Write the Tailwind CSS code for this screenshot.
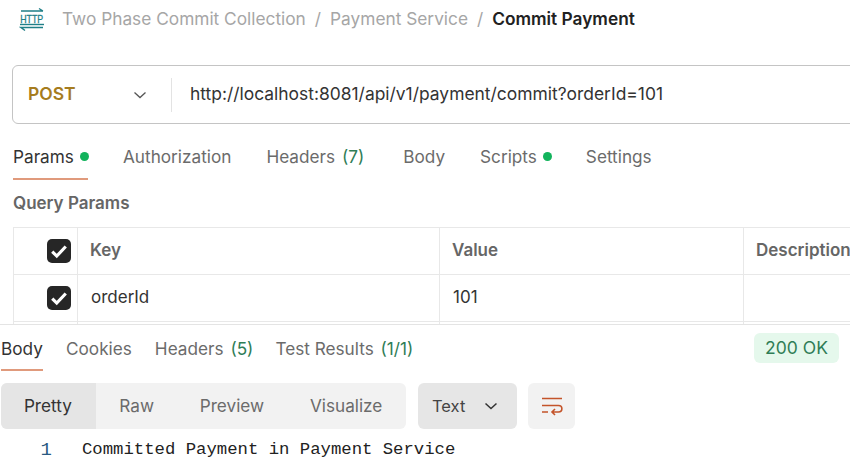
<!DOCTYPE html>
<html><head><meta charset="utf-8"><script src="https://cdn.jsdelivr.net/npm/@tailwindcss/browser@4"></script></head>
<body class="bg-white">
<div class="w-[850px] h-[465px] overflow-hidden flex flex-col font-['Inter',sans-serif] text-[#6b6b6b] text-[17.2px]">
  <div class="h-[65px] shrink-0 flex items-start pl-[19px] pt-[7px]">
    <svg width="26" height="26" viewBox="0 0 26 26" class="shrink-0" fill="none" stroke="#1f7f87" stroke-width="1.4">
      <path d="M2 4H24M20 1.5L24 4"/>
      <path d="M1 17.5H25"/><path d="M6 23.5L2 20.5H24"/>
      <text transform="scale(.8 1)" x="1.5" y="16" font-family="Liberation Sans" font-size="11" stroke="#1f7f87" stroke-width=".3" fill="#1f7f87">HTTP</text>
    </svg>
    <div class="ml-[17px] mt-[2px] flex items-center whitespace-nowrap leading-[20px] text-[#a6a6a6] text-[17.3px]">
      <span>Two Phase Commit Collection</span><span class="mx-[9px]">/</span><span>Payment Service</span><span class="mx-[9px]">/</span><span class="font-semibold text-[#212121] text-[17.3px]">Commit Payment</span>
    </div>
  </div>
  <div class="h-[59px] shrink-0 ml-[12px] w-[860px] border border-[#c4c4c4] rounded-[6px] flex items-center">
    <div class="w-[158px] shrink-0 flex items-center justify-between pl-[15px] pr-[24px] text-[17.5px]">
      <span class="font-semibold text-[#a67c1e]">POST</span>
      <svg width="14" height="14" viewBox="0 0 14 14" fill="none" stroke="#555" stroke-width="1.3"><path d="M1.5 4.5L7 9.5L12.5 4.5"/></svg>
    </div>
    <div class="w-px h-[34px] bg-[#e3e3e3]"></div>
    <div class="pl-[18px] text-[#333] whitespace-nowrap text-[17.43px]">http://localhost:8081/api/v1/payment/commit?orderId=101</div>
  </div>
  <div class="h-[57px] shrink-0 flex items-start pl-[13px] pt-[23px] leading-[20px] whitespace-nowrap">
    <div class="w-[75px] h-[33px] shrink-0 border-b-2 border-[#e09a7c] flex items-start text-[#333]"><span>Params</span><span class="w-[9px] h-[9px] shrink-0 rounded-full bg-[#12b35c] ml-[6px] mt-[5px]"></span></div>
    <span class="ml-[35px]">Authorization</span>
    <span class="ml-[35px]">Headers <span class="text-[#2f7d56] ml-[2px]">(7)</span></span>
    <span class="ml-[39px]">Body</span>
    <span class="ml-[35px] flex items-start">Scripts<span class="w-[9px] h-[9px] shrink-0 rounded-full bg-[#12b35c] ml-[6px] mt-[5px]"></span></span>
    <span class="ml-[34px]">Settings</span>
  </div>
  <div class="h-[46px] shrink-0 pl-[13px] pt-[12px] font-semibold text-[#666] text-[17px] leading-[20px]">Query Params</div>
  <div class="ml-[13px] h-[98px] shrink-0 w-[900px] overflow-hidden border-t border-l border-[#e8e8e8] grid grid-cols-[64px_362px_304px_1fr] grid-rows-[47px_47px_10px]">
    <div class="border-r border-b border-[#e8e8e8] flex items-center pl-[33px]">
      <span class="w-[24px] h-[24px] rounded-[5px] bg-[#262626] flex items-center justify-center"><svg width="18" height="18" viewBox="0 0 16 16" fill="none" stroke="#fff" stroke-width="2.8"><path d="M2 8.5L6 12.5L14 4"/></svg></span>
    </div>
    <div class="border-r border-b border-[#e8e8e8] flex items-center pl-[12px] font-semibold text-[#666] text-[17px]">Key</div>
    <div class="border-r border-b border-[#e8e8e8] flex items-center pl-[12px] font-semibold text-[#666] text-[17px]">Value</div>
    <div class="border-b border-[#e8e8e8] flex items-center pl-[12px] font-semibold text-[#666] text-[17px]">Description</div>
    <div class="border-r border-b border-[#e8e8e8] flex items-center pl-[33px]">
      <span class="w-[24px] h-[24px] rounded-[5px] bg-[#262626] flex items-center justify-center"><svg width="18" height="18" viewBox="0 0 16 16" fill="none" stroke="#fff" stroke-width="2.8"><path d="M2 8.5L6 12.5L14 4"/></svg></span>
    </div>
    <div class="border-r border-b border-[#e8e8e8] flex items-center pl-[13px] text-[#333] text-[17px]">orderId</div>
    <div class="border-r border-b border-[#e8e8e8] flex items-center pl-[13px] text-[#333] text-[17px]">101</div>
    <div class="border-b border-[#e8e8e8]"></div>
    <div class="border-r border-[#e8e8e8]"></div><div class="border-r border-[#e8e8e8]"></div><div class="border-r border-[#e8e8e8]"></div><div></div>
  </div>
  <div class="h-[140px] shrink-0 bg-white border-t border-[#e4e4e4] -mt-[1px] relative">
    <div class="flex items-start h-[46px] pl-[1px] pt-[13px] leading-[22px] whitespace-nowrap">
      <div class="w-[42px] h-[33px] shrink-0 border-b-2 border-[#e09a7c] text-[#333]">Body</div>
      <span class="ml-[23px]">Cookies</span>
      <span class="ml-[23px]">Headers <span class="text-[#2f7d56] ml-[2px]">(5)</span></span>
      <span class="ml-[22px]">Test Results <span class="text-[#2f7d56] ml-[2px]">(1/1)</span></span>
      <span class="ml-auto mr-[11px] -mt-[5px] w-[85px] h-[30px] rounded-[6px] bg-[#e5f8ec] text-[#2f7d56] text-[17.5px] flex items-center justify-center">200 OK</span>
    </div>
    <div class="flex items-stretch h-[46px] mt-[12px] pl-[1px]">
      <div class="w-[405px] rounded-[6px] bg-[#f2f2f2] flex items-center overflow-hidden">
        <span class="w-[95px] h-full bg-[#e5e5e5] text-[#333] flex items-center justify-center pr-[1px]">Pretty</span>
        <span class="w-[82px] text-center">Raw</span>
        <span class="w-[109px] text-center">Preview</span>
        <span class="w-[120px] text-center">Visualize</span>
      </div>
      <div class="ml-[12px] w-[99px] rounded-[6px] bg-[#e6e6e6] flex items-center justify-between pl-[14px] pr-[19px] text-[#444] text-[16.5px]">
        <span>Text</span>
        <svg width="14" height="14" viewBox="0 0 14 14" fill="none" stroke="#333" stroke-width="1.5"><path d="M1.5 4.5L7 9.5L12.5 4.5"/></svg>
      </div>
      <div class="ml-[11px] w-[47px] rounded-[6px] bg-[#f2f2f2] flex items-center justify-center">
        <svg width="24" height="22" viewBox="0 0 24 22" fill="none" stroke="#c4542a" stroke-width="1.6"><path d="M2 3.5H22M2 10.5H18.5C23 10.5 23 17 18.5 17H12M15 14L12 17L15 20M2 17H8"/></svg>
      </div>
    </div>
    <div class="flex items-center h-[38px] mt-[2px] font-['Liberation_Mono',monospace] text-[17.3px] leading-none">
      <span class="w-[52px] text-right text-[#2a5a82] text-[19px]">1</span>
      <span class="ml-[30px] text-[#222] whitespace-nowrap">Committed Payment in Payment Service</span>
    </div>
  </div>
</div>
</body></html>
